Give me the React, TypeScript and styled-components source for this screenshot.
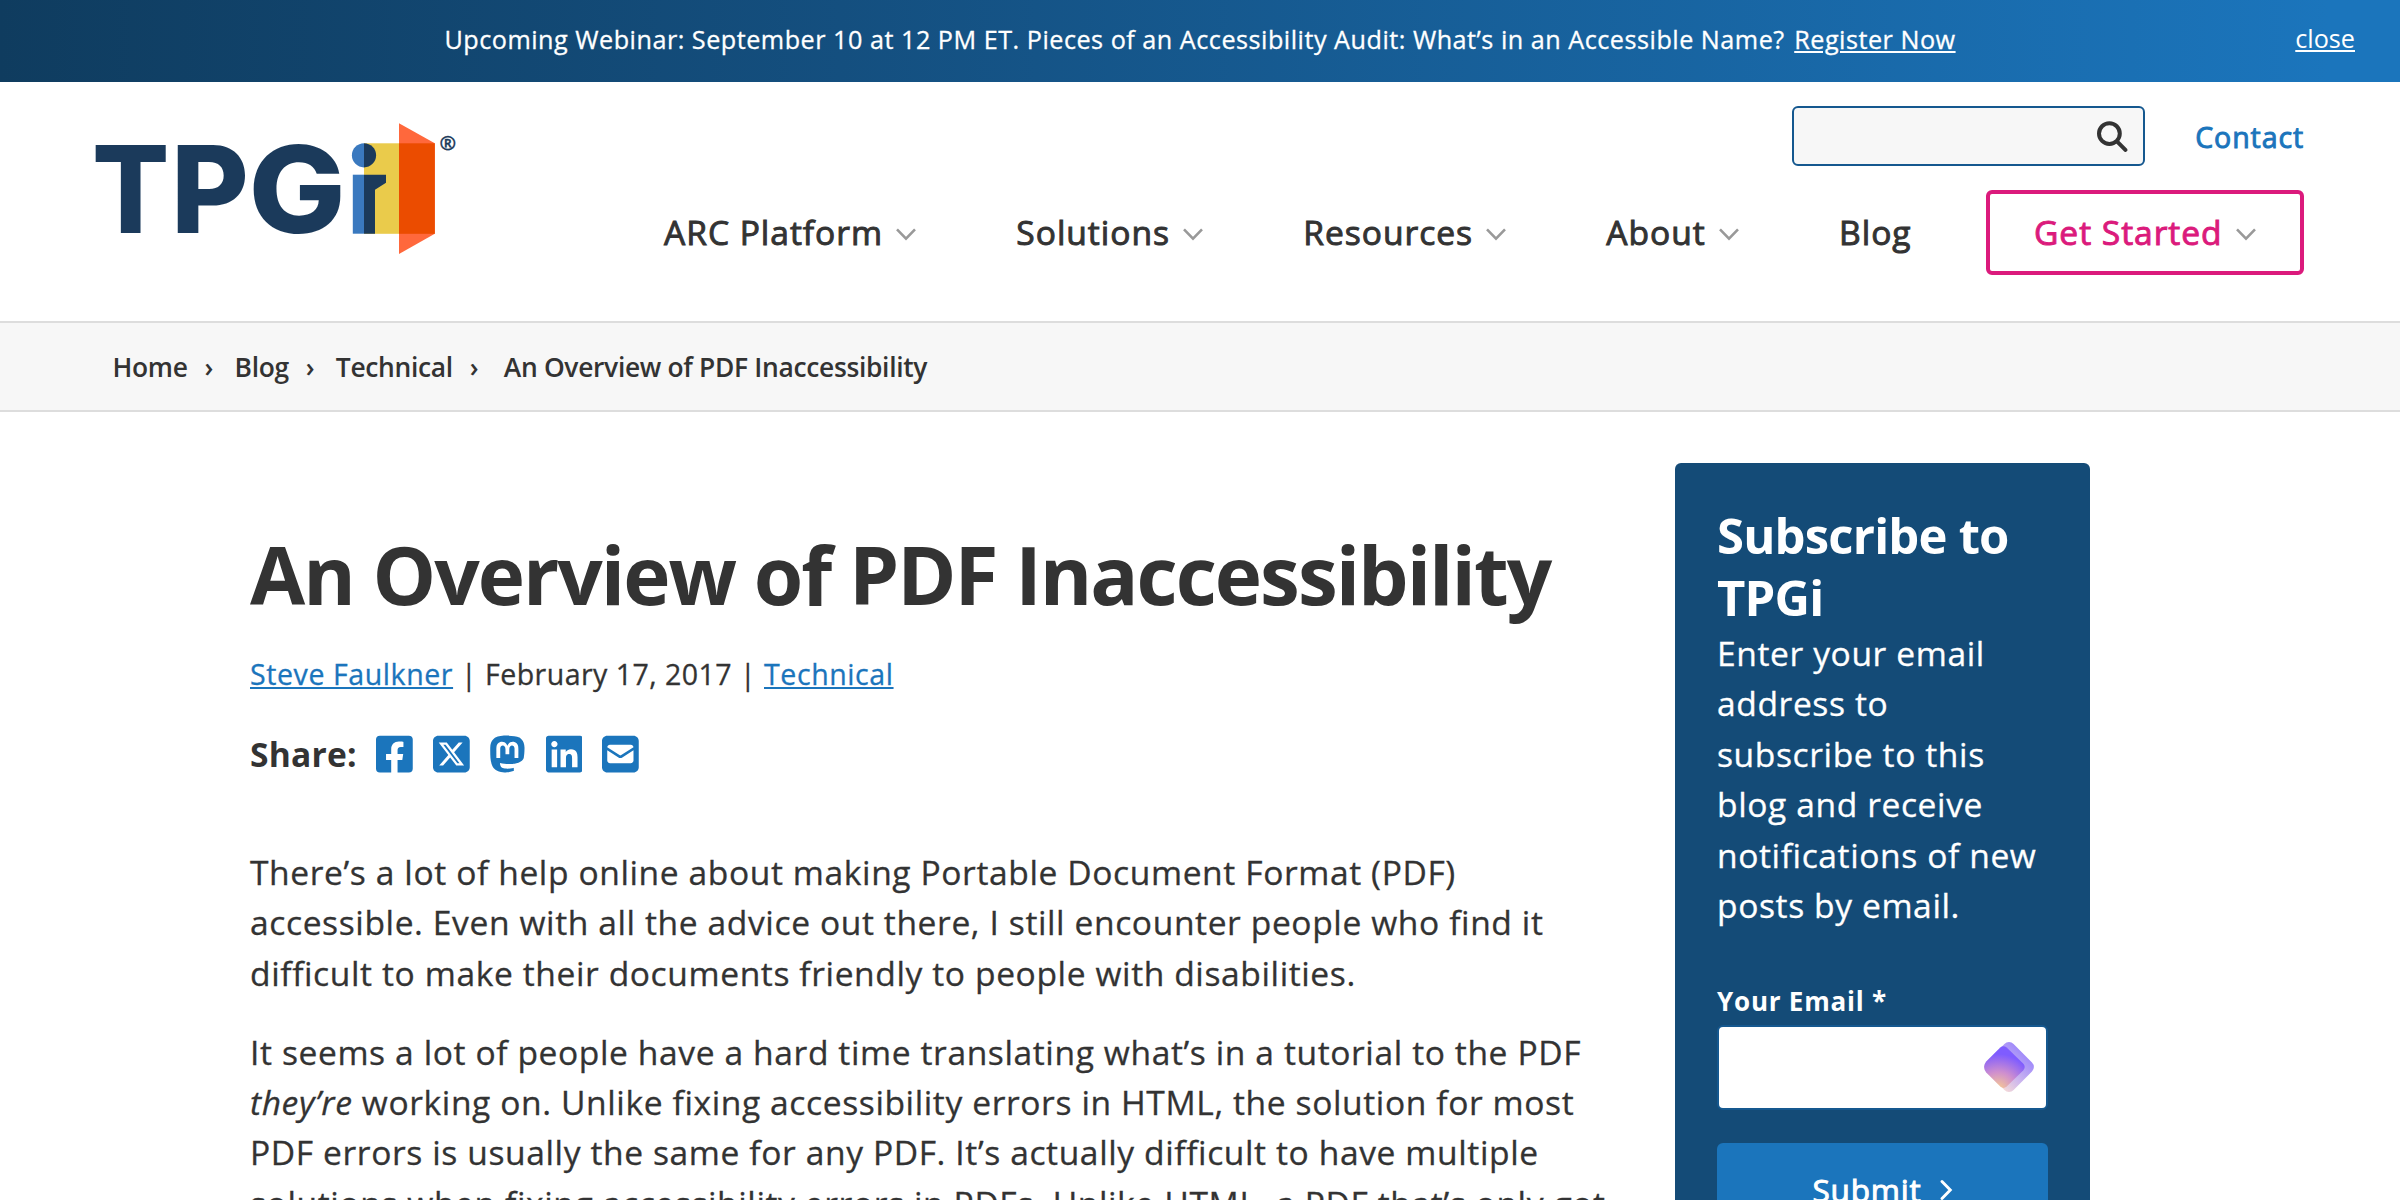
import React from "react";
import styled, { createGlobalStyle, css } from "styled-components";
import { FaFacebookSquare } from "react-icons/fa";
import { FaSquareXTwitter, FaMastodon, FaLinkedin, FaSquareEnvelope } from "react-icons/fa6";

const color = {
  ink: "#333333",
  blue: "#1b75bc",
  navy: "#144b77",
  outline: "#15588f",
  pink: "#db1a7c",
  grey: "#f7f7f7",
  rule: "#dddddd",
};

const GlobalStyle = createGlobalStyle`
  * { box-sizing: border-box; }
  html, body { margin: 0; padding: 0; background: #fff; }
  body {
    height: 1200px;
    overflow: hidden;
    font-family: "Open Sans", "Noto Sans", sans-serif;
    font-size: 33.6px;
    line-height: 50.4px;
    letter-spacing: 0.018em;
    color: ${color.ink};
  }
`;

/* Regular text, set a touch darker than the bare face. */
const book = css`
  font-weight: 400;
  -webkit-text-stroke: 0.3px currentColor;
`;

/* Halfway between the regular and the semibold cut of the face. */
const medium = css`
  font-weight: 400;
  -webkit-text-stroke: 0.95px currentColor;
`;

const Page = styled.div`
  width: 2400px;
  height: 1200px;
  overflow: hidden;
`;

const Banner = styled.div`
  ${book}
  display: grid;
  grid-template-columns: 1fr auto 1fr;
  align-items: center;
  height: 82px;
  padding: 0 45px;
  background: linear-gradient(90deg, #0f3c5f 0%, #144f7f 35%, #1b75bc 97%);
  color: #fff;
  font-size: 25.2px;
  line-height: 36px;
  letter-spacing: 0.02em;
`;

const BannerText = styled.p`
  grid-column: 2;
  margin: -4px 0 0;
`;

const BannerLink = styled.a`
  color: #fff;
  margin-left: 2.5px;
  text-decoration: underline;
`;

const CloseLink = styled.a`
  justify-self: end;
  margin-top: -6px;
  color: #fff;
  letter-spacing: 0;
  -webkit-text-stroke: 0;
  text-decoration: underline;
`;

const Header = styled.header`
  display: flex;
  justify-content: space-between;
  align-items: flex-start;
  height: 239px;
  padding: 24px 96px 0;
`;

const Logo = styled.svg`
  display: block;
  overflow: visible;
  width: 364px;
  height: 132px;
  margin-top: 17px;
`;

const HeaderRight = styled.div`
  display: flex;
  flex-direction: column;
  align-items: flex-end;
  gap: 24px;
`;

const Utilities = styled.div`
  display: flex;
  align-items: center;
  gap: 50px;
`;

const SearchBox = styled.div`
  display: flex;
  align-items: center;
  justify-content: flex-end;
  width: 353px;
  height: 60px;
  padding-right: 15px;
  border: 2px solid ${color.outline};
  border-radius: 6px;
  background: ${color.grey};
`;

const ContactLink = styled.a`
  ${medium}
  color: ${color.blue};
  font-size: 28.56px;
  letter-spacing: 0.031em;
  margin-top: 3px;
`;

const Nav = styled.nav`
  display: flex;
  align-items: center;
  height: 85px;
`;

const NavItem = styled.a<{ $boxed?: boolean }>`
  ${medium}
  display: flex;
  align-items: center;
  gap: 13.4px;
  height: 85px;
  padding: 0 50px;
  letter-spacing: 0.0285em;
  white-space: nowrap;
  ${(p) =>
    p.$boxed &&
    css`
      margin-left: 24.8px;
      padding: 0 44px 0 43.7px;
      border: 4px solid ${color.pink};
      border-radius: 6px;
      color: ${color.pink};
    `}
`;

const Crumbs = styled.div`
  display: flex;
  align-items: center;
  height: 91px;
  padding: 1px 111px 0 112.5px;
  border-top: 2px solid ${color.rule};
  border-bottom: 2px solid ${color.rule};
  background: ${color.grey};
  font-size: 26.4px;
  font-weight: 600;
  letter-spacing: -0.32px;
`;

const Separator = styled.span`
  margin: 0 21.5px 0 17px;
`;

const Current = styled.span`
  margin-left: 4px;
`;

const Main = styled.main`
  display: flex;
  align-items: flex-start;
  padding-left: 250px;
`;

const Article = styled.article`
  width: 1362px;
  padding-top: 114px;
`;

const Title = styled.h1`
  margin: 0;
  font-size: 80px;
  font-weight: 700;
  line-height: 96px;
  letter-spacing: -2px;
`;

const Meta = styled.p`
  ${book}
  margin: 30px 0 33px;
  font-size: 28.56px;
  line-height: 44px;
  letter-spacing: 0.02em;
  a {
    color: ${color.blue};
    text-decoration: underline;
  }
`;

const PostDate = styled.span`
  letter-spacing: 0.016em;
`;

const ShareRow = styled.div`
  display: flex;
  align-items: center;
  gap: 19.7px;
  height: 50px;
  margin-bottom: 67.9px;
  color: ${color.blue};
  svg {
    display: block;
    width: 36.75px;
    height: 42px;
  }
`;

const ShareLabel = styled.span`
  color: ${color.ink};
  font-weight: 700;
  letter-spacing: 0.006em;
`;

const Paragraph = styled.p`
  ${book}
  margin: 0 0 28.5px;
`;

const Subscribe = styled.aside`
  width: 415px;
  height: 820px;
  margin: 51px 0 0 63px;
  padding: 41px 42px 0;
  border-radius: 6px;
  background: ${color.navy};
  color: #fff;
`;

const SubscribeTitle = styled.h2`
  margin: 0;
  font-size: 49px;
  font-weight: 700;
  line-height: 62px;
  letter-spacing: -0.8px;
`;

const SubscribeText = styled.p`
  ${book}
  margin: 0 0 52px;
`;

const FieldLabel = styled.label`
  display: block;
  font-size: 26px;
  font-weight: 700;
  line-height: 39px;
  letter-spacing: 0.03em;
`;

const Field = styled.div`
  display: flex;
  align-items: center;
  justify-content: flex-end;
  height: 85px;
  margin-top: 4px;
  padding: 0 12px 2px 0;
  border: 2px solid ${color.outline};
  border-radius: 6px;
  background: #fff;
`;

const SubmitButton = styled.div`
  ${medium}
  display: flex;
  align-items: center;
  justify-content: center;
  gap: 18px;
  height: 93px;
  margin-top: 33px;
  border-radius: 6px;
  background: ${color.blue};
  font-size: 31.5px;
  letter-spacing: 0.8px;
`;

const ChevronIcon = styled.svg`
  width: 20px;
  height: 13px;
  margin-top: 3px;
`;

const Chevron = () => (
  <ChevronIcon viewBox="0 0 20 13" fill="none">
    <path d="M1 1.3 L10 10.6 L19 1.3" stroke="#999" strokeWidth="2.6" />
  </ChevronIcon>
);

const BrandLogo = () => (
  <Logo viewBox="16 23 364 132">
    <g fill="#1b3a5b" fontFamily="Inter, sans-serif" fontWeight="800" fontSize="121">
      <text x="12" y="132.5" textLength="78" lengthAdjust="spacingAndGlyphs">T</text>
      <text x="91" y="132.5" textLength="78.5" lengthAdjust="spacingAndGlyphs">P</text>
      <text x="168.5" y="132.5" textLength="98" lengthAdjust="spacingAndGlyphs">G</text>
    </g>
    <rect x="284" y="43.3" width="40" height="90.5" fill="#eacb4b" />
    <polygon points="319,23.3 354.8,43.3 354.8,133.8 319,154" fill="#ff683c" />
    <rect x="319" y="43.3" width="35.8" height="90.5" fill="#eb4c00" />
    <path d="M284 43.2 A12.1 12.1 0 0 0 284 67.4 Z" fill="#3a79bf" />
    <path d="M284 43.2 A12.1 12.1 0 0 1 284 67.4 Z" fill="#1b3a5b" />
    <rect x="272.8" y="74.7" width="11.2" height="59" fill="#3a79bf" />
    <polygon points="284,74.7 306,74.7 306,82.8 295,89.8 295,133.7 284,133.7" fill="#1b3a5b" />
    <text
      x="359.6"
      y="50.2"
      fill="#1b3a5b"
      stroke="#1b3a5b"
      strokeWidth="0.3"
      fontFamily="Open Sans, sans-serif"
      fontWeight="700"
      fontSize="20"
      letterSpacing="0"
    >
      ®
    </text>
  </Logo>
);

const SearchIcon = () => (
  <svg width="31" height="31" viewBox="0 0 31 31" fill="none" stroke="#333" strokeWidth="4" strokeLinecap="round">
    <circle cx="12.4" cy="12.6" r="10.4" />
    <path d="M20.2 20.6 L28.4 28.9" />
  </svg>
);

const DiamondIcon = () => (
  <svg width="50" height="50" viewBox="0 0 50 50">
    <defs>
      <radialGradient id="front" gradientUnits="userSpaceOnUse" cx="14" cy="48" r="40">
        <stop offset="0" stopColor="#fbd08d" />
        <stop offset="0.45" stopColor="#cf8fce" />
        <stop offset="0.9" stopColor="#7f5cff" />
      </radialGradient>
      <linearGradient id="fade" gradientUnits="userSpaceOnUse" x1="25" y1="0" x2="25" y2="50">
        <stop offset="0" stopColor="#9681fd" />
        <stop offset="0.55" stopColor="#ccb6ee" />
        <stop offset="1" stopColor="#ffe2d2" />
      </linearGradient>
    </defs>
    <rect x="5.5" y="5.5" width="39" height="39" rx="6.5" transform="rotate(45 25 25)" fill="url(#fade)" />
    <path
      d="M16.3 5.4 Q19.5 2.8 22.7 5.6 L39.4 21.8 Q42 25 39.4 28.2 L22.7 44.6 Q19.5 47.3 16.3 44.6 L2.2 30.4 Q-2 25 2.2 19.6 Z"
      fill="url(#front)"
    />
  </svg>
);

const navItems = [
  { label: "ARC Platform", menu: true },
  { label: "Solutions", menu: true },
  { label: "Resources", menu: true },
  { label: "About", menu: true },
  { label: "Blog", menu: false },
  { label: "Get Started", menu: true, boxed: true },
];

export default function App() {
  return (
    <Page>
      <GlobalStyle />
      <Banner>
        <BannerText>
          Upcoming Webinar: September 10 at 12 PM ET. Pieces of an Accessibility Audit: What’s in an Accessible Name?{" "}
          <BannerLink>Register Now</BannerLink>
        </BannerText>
        <CloseLink>close</CloseLink>
      </Banner>

      <Header>
        <BrandLogo />
        <HeaderRight>
          <Utilities>
            <SearchBox>
              <SearchIcon />
            </SearchBox>
            <ContactLink>Contact</ContactLink>
          </Utilities>
          <Nav>
            {navItems.map((item) => (
              <NavItem key={item.label} $boxed={item.boxed}>
                {item.label}
                {item.menu && <Chevron />}
              </NavItem>
            ))}
          </Nav>
        </HeaderRight>
      </Header>

      <Crumbs>
        <span>Home</span>
        <Separator>›</Separator>
        <span>Blog</span>
        <Separator>›</Separator>
        <span>Technical</span>
        <Separator>›</Separator>
        <Current>An Overview of PDF Inaccessibility</Current>
      </Crumbs>

      <Main>
        <Article>
          <Title>An Overview of PDF Inaccessibility</Title>
          <Meta>
            <a>Steve Faulkner</a>
            <PostDate> | February 17, 2017 | </PostDate>
            <a>Technical</a>
          </Meta>
          <ShareRow>
            <ShareLabel>Share:</ShareLabel>
            <FaFacebookSquare />
            <FaSquareXTwitter />
            <FaMastodon />
            <FaLinkedin />
            <FaSquareEnvelope />
          </ShareRow>
          <Paragraph>
            There’s a lot of help online about making Portable Document Format (PDF) accessible. Even with all the
            advice out there, I still encounter people who find it difficult to make their documents friendly to people
            with disabilities.
          </Paragraph>
          <Paragraph>
            It seems a lot of people have a hard time translating what’s in a tutorial to the PDF <em>they’re</em>{" "}
            working on. Unlike fixing accessibility errors in HTML, the solution for most PDF errors is usually the same
            for any PDF. It’s actually difficult to have multiple solutions when fixing accessibility errors in PDFs.
            Unlike HTML, a PDF that’s only got
          </Paragraph>
        </Article>
        <Subscribe>
          <SubscribeTitle>Subscribe to TPGi</SubscribeTitle>
          <SubscribeText>
            Enter your email address to subscribe to this blog and receive notifications of new posts by email.
          </SubscribeText>
          <FieldLabel>Your Email *</FieldLabel>
          <Field>
            <DiamondIcon />
          </Field>
          <SubmitButton>
            Submit
            <svg width="13" height="22" viewBox="0 0 13 22" fill="none">
              <path d="M2 2.5 L10.3 11 L2 19.5" stroke="#fff" strokeWidth="2.9" strokeLinecap="round" />
            </svg>
          </SubmitButton>
        </Subscribe>
      </Main>
    </Page>
  );
}
